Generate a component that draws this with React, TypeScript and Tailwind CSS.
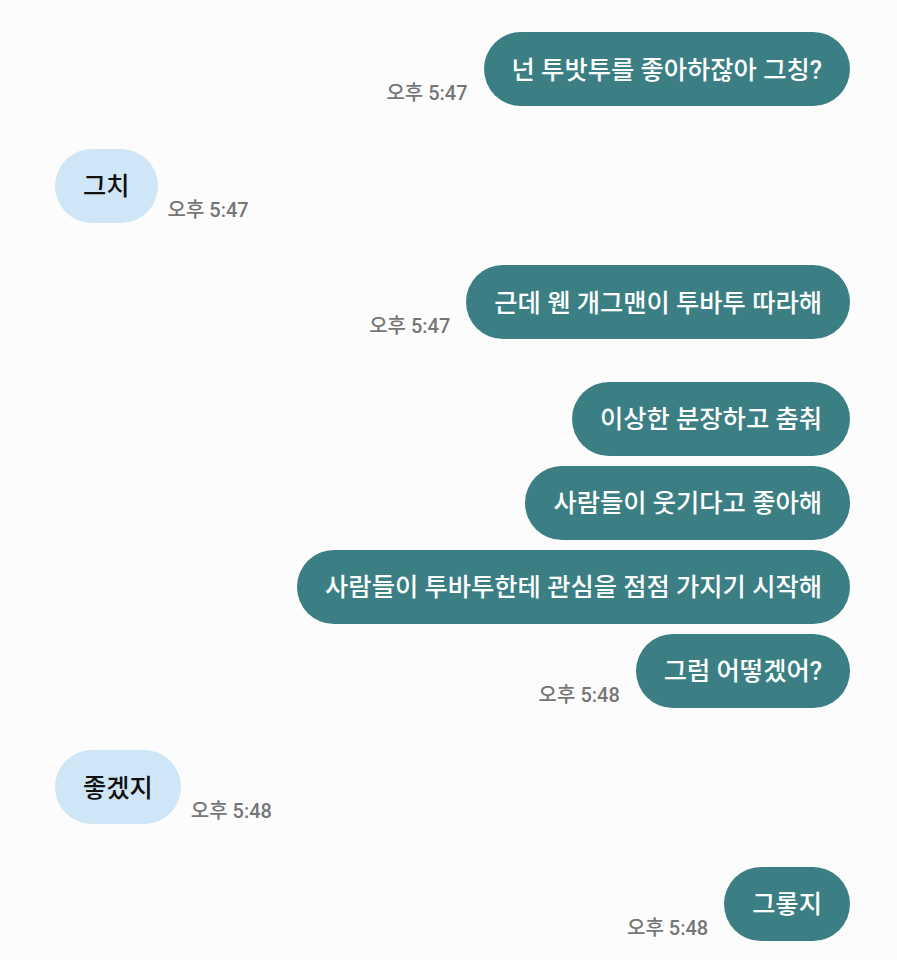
import React from "react";

type Message = {
  text: string;
  mine: boolean;
  time?: string;
};

// Each inner array is one burst of messages; the time sits next to the last one
const groups: Message[][] = [
  [{ text: "넌 투밧투를 좋아하잖아 그칭?", mine: true, time: "오후 5:47" }],
  [{ text: "그치", mine: false, time: "오후 5:47" }],
  [{ text: "근데 웬 개그맨이 투바투 따라해", mine: true, time: "오후 5:47" }],
  [
    { text: "이상한 분장하고 춤춰", mine: true },
    { text: "사람들이 웃기다고 좋아해", mine: true },
    { text: "사람들이 투바투한테 관심을 점점 가지기 시작해", mine: true },
    { text: "그럼 어떻겠어?", mine: true, time: "오후 5:48" },
  ],
  [{ text: "좋겠지", mine: false, time: "오후 5:48" }],
  [{ text: "그롷지", mine: true, time: "오후 5:48" }],
];

const font = {
  fontFamily: "Roboto, 'Noto Sans CJK KR', sans-serif",
};

function Bubble({ msg }: { msg: Message }) {
  const time = msg.time ? (
    <span className="mb-[3px] text-[20px] leading-none font-medium text-[#767676] whitespace-nowrap">
      {msg.time}
    </span>
  ) : null;

  if (msg.mine) {
    return (
      <div className="flex items-end justify-end gap-4">
        {time}
        <div className="flex h-[74px] items-center rounded-full bg-[#3b7f84] px-7 pt-[3px] text-[25.3px] font-medium text-white whitespace-nowrap">
          {msg.text}
        </div>
      </div>
    );
  }

  return (
    <div className="flex items-end justify-start gap-2.5">
      <div className="flex h-[74px] items-center rounded-full bg-[#cfe6f6] px-7 pt-[3px] text-[25.3px] font-medium text-[#111] whitespace-nowrap">
        {msg.text}
      </div>
      {time}
    </div>
  );
}

export default function App() {
  return (
    <main
      className="min-h-screen bg-[#fcfcfc] pt-8 pl-[55px] pr-[47px] flex flex-col gap-[42.5px]"
      style={font}
    >
      {groups.map((group, i) => (
        <div key={i} className="flex flex-col gap-2.5">
          {group.map((msg, j) => (
            <Bubble key={j} msg={msg} />
          ))}
        </div>
      ))}
    </main>
  );
}
